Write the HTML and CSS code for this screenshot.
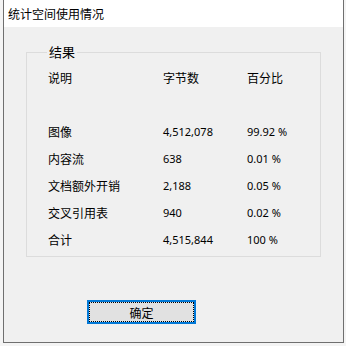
FILE: index.html
```html
<!DOCTYPE html>
<html lang="zh-CN">
<head>
    <meta charset="UTF-8">
    <title>统计空间使用情况</title>
    <link rel="stylesheet" href="styles.css">
</head>
<body>
    <div class="window">
        <div class="title-bar">统计空间使用情况</div>

        <div class="dialog-body">
            <fieldset class="group">
                <legend>结果</legend>
                <div class="stats">
                    <span>说明</span><span>字节数</span><span>百分比</span>
                    <span class="blank"></span><span class="blank"></span><span class="blank"></span>
                    <span>图像</span><span class="num">4,512,078</span><span class="num">99.92 %</span>
                    <span>内容流</span><span class="num">638</span><span class="num">0.01 %</span>
                    <span>文档额外开销</span><span class="num">2,188</span><span class="num">0.05 %</span>
                    <span>交叉引用表</span><span class="num">940</span><span class="num">0.02 %</span>
                    <span>合计</span><span class="num">4,515,844</span><span class="num">100 %</span>
                </div>
            </fieldset>

            <button class="btn-ok">确定</button>
        </div>
    </div>
</body>
</html>
```

FILE: styles.css
```css
body {
    margin: 0;
    background: #f4f4f4;
    font-family: "Noto Sans", "Noto Sans CJK SC", sans-serif;
    font-size: 12px;
    color: #000;
}

.window {
    width: 339px;
    height: 342px;
    margin-left: 3px;
    border: 1px solid #6f6f6f;
    border-top: none;
    background: #f0f0f0;
    display: flex;
    flex-direction: column;
}

.title-bar {
    height: 27px;
    line-height: 27px;
    padding-left: 4px;
    background: #fff;
    font-family: "Noto Sans CJK SC", sans-serif;
}

.dialog-body {
    flex: 1;
    padding: 17px 22px 0 22px;
}

.group {
    margin: 0;
    padding: 4px 0 3px 21px;
    border: 1px solid #dcdcdc;
    min-width: 0;
}

.group legend {
    margin-left: -1px;
    padding: 0 2px;
    line-height: 16px;
    font-family: "Noto Sans CJK SC", sans-serif;
    font-size: 13px;
}

.stats {
    display: grid;
    grid-template-columns: 115px 84px 1fr;
    grid-auto-rows: 27px;
    align-items: center;
}

.stats span {
    font-family: "Noto Sans CJK SC", sans-serif;
}

.stats .num {
    font-family: "Noto Sans", sans-serif;
    font-size: 11px;
}

.btn-ok {
    display: block;
    margin: 43px 0 0 61px;
    width: 109px;
    height: 24px;
    border: 2px solid #0078d7;
    background: #e1e1e1;
    outline: 1px dotted #000;
    outline-offset: -3px;
    font-family: "Noto Sans CJK SC", sans-serif;
    font-size: 12px;
    color: #000;
    padding: 0;
}
```
